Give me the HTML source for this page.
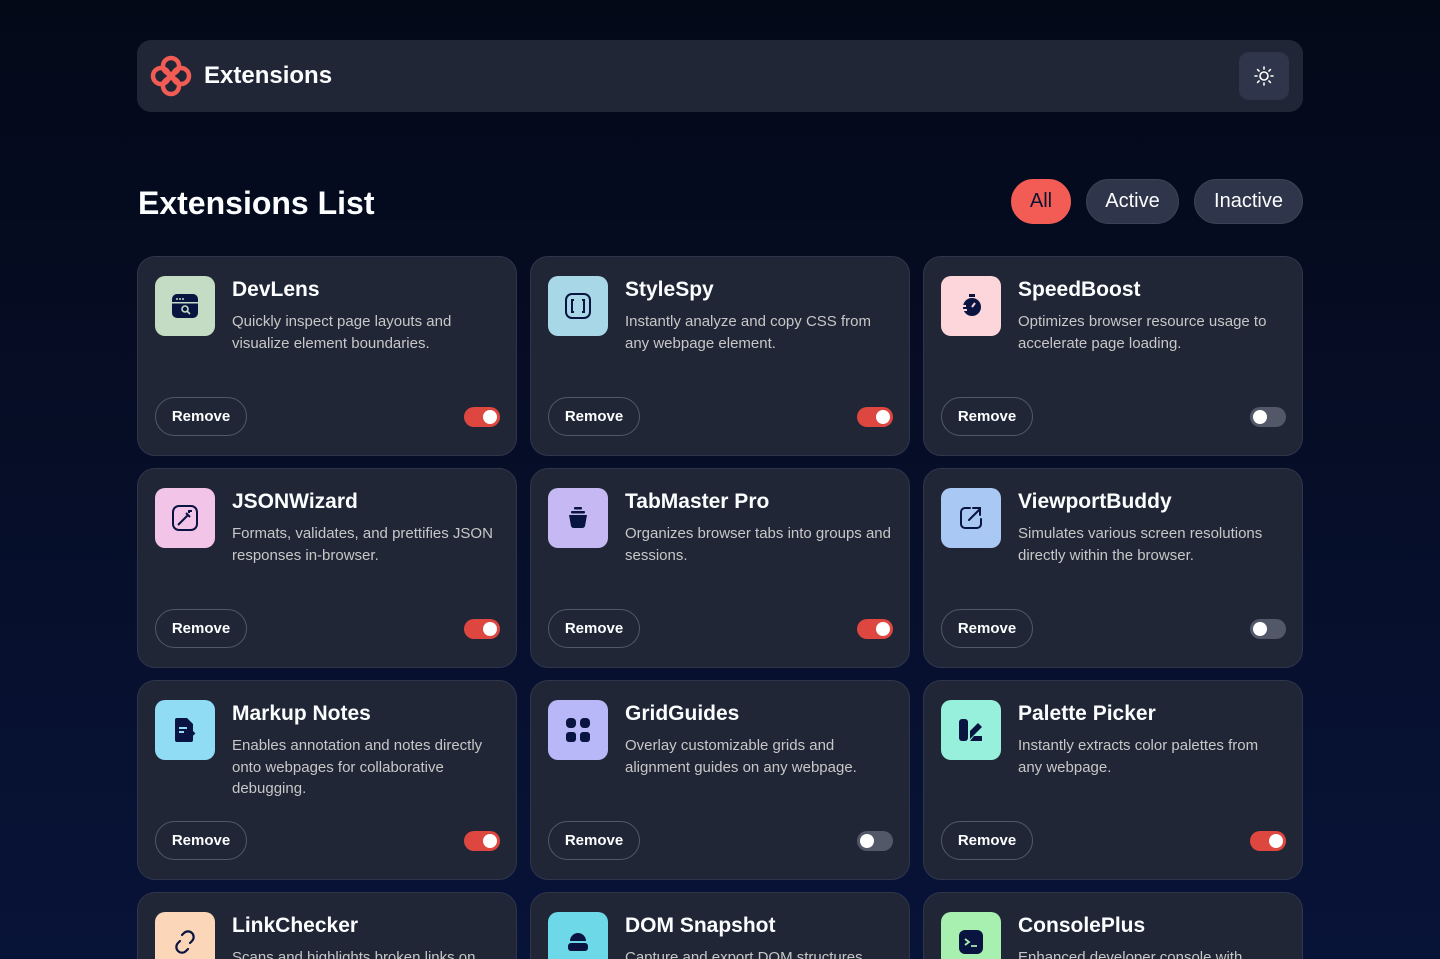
<!DOCTYPE html>
<html><head><meta charset="utf-8"><style>
*{box-sizing:border-box;margin:0;padding:0}
html,body{width:1440px;height:959px;overflow:hidden}
html{background:#060d28}
body{position:relative;background:linear-gradient(180deg,#040918 0%,#081338 100%);font-family:"Liberation Sans","DejaVu Sans",sans-serif;color:#fbfdfe}
.hdr{position:absolute;left:137px;top:40px;width:1166px;height:72px;background:#212636;border-radius:14px}
.logo{position:absolute;left:13px;top:15px}
.hdr h1{position:absolute;left:67px;top:22px;font-size:24px;font-weight:bold}
.theme{position:absolute;left:1102px;top:12px;width:50px;height:48px;background:#2f354b;border-radius:10px}
.theme svg{position:absolute;left:15px;top:14px}
h2{position:absolute;left:138px;top:185px;font-size:32px;font-weight:bold}
.f{position:absolute;top:179px;height:45px;border-radius:23px;background:#2f354b;font-size:20px;line-height:43px;text-align:center;border:1px solid #3a4256}
.card{position:absolute;width:380px;height:200px;background:#212636;border-radius:18px;border:1px solid #2f354b;overflow:hidden}
.card.last{height:67px;border-bottom:none;border-radius:18px 18px 0 0}
.ic{position:absolute;left:17px;top:19px;width:60px;height:60px;border-radius:10px}
.ic svg{position:absolute;left:15px;top:15px}
.t{position:absolute;left:94px;top:21px;font-size:21px;font-weight:bold}
.d{position:absolute;left:94px;top:54px;width:268px;font-size:15px;line-height:21.5px;color:#c7c7c7}
.rm{position:absolute;left:17px;top:140px;width:92px;height:39px;border:1px solid #535868;border-radius:20px;font-size:15px;font-weight:bold;line-height:37px;text-align:center}
.tg{position:absolute;left:326px;top:150px;width:36px;height:20px;border-radius:10px;background:#de473f}
.tg::after{content:"";position:absolute;top:3px;right:3px;width:14px;height:14px;border-radius:50%;background:#fff}
.tg.off{background:#525868}.tg.off::after{right:auto;left:3px}
</style></head><body>
<div class="hdr">
<svg class="logo" width="42" height="42" viewBox="0 0 42 42" fill="none" stroke="#f25c54" stroke-width="4.5"><rect x="13" y="3" width="16" height="16" rx="8" transform="rotate(45 21 11)"/><rect x="13" y="23" width="16" height="16" rx="8" transform="rotate(45 21 31)"/><rect x="3" y="13" width="16" height="16" rx="8" transform="rotate(45 11 21)"/><rect x="23" y="13" width="16" height="16" rx="8" transform="rotate(45 31 21)"/></svg>
<h1>Extensions</h1>
<div class="theme"><svg width="20" height="20" viewBox="0 0 20 20" fill="none" stroke="#fff" stroke-width="1.6" stroke-linecap="round"><circle cx="10" cy="10" r="4"/><path d="M10 1v2M10 17v2M1 10h2M17 10h2M3.6 3.6l1.4 1.4M15 15l1.4 1.4M3.6 16.4L5 15M15 5l1.4-1.4"/></svg></div>
</div>
<h2>Extensions List</h2>
<div class="f" style="left:1011px;width:60px;background:#f25c54;border-color:#f25c54;color:#0b1330">All</div>
<div class="f" style="left:1086px;width:93px">Active</div>
<div class="f" style="left:1194px;width:109px">Inactive</div>

<div class="card" style="left:137px;top:256px"><div class="ic" style="background:#c3dcc3"><svg width="30" height="30" viewBox="0 0 30 30"><rect x="2" y="3" width="26" height="24" rx="5" fill="#091540"/><circle cx="7" cy="8" r="1" fill="#c3dcc3"/><circle cx="10" cy="8" r="1" fill="#c3dcc3"/><circle cx="13" cy="8" r="1" fill="#c3dcc3"/><rect x="2" y="11" width="26" height="1.5" fill="#c3dcc3"/><circle cx="15" cy="18" r="3" stroke="#c3dcc3" stroke-width="1.6" fill="none"/><path d="M17 20l3 3" stroke="#c3dcc3" stroke-width="1.6"/></svg></div><div class="t">DevLens</div><div class="d">Quickly inspect page layouts and visualize element boundaries.</div><div class="rm">Remove</div><div class="tg"></div></div>
<div class="card" style="left:530px;top:256px"><div class="ic" style="background:#a8d8e8"><svg width="30" height="30" viewBox="0 0 30 30" fill="none" stroke="#091540" stroke-width="2"><rect x="3" y="3" width="24" height="24" rx="6"/><path d="M11 9h-2v12h2M19 9h2v12h-2"/></svg></div><div class="t">StyleSpy</div><div class="d">Instantly analyze and copy CSS from any webpage element.</div><div class="rm">Remove</div><div class="tg"></div></div>
<div class="card" style="left:923px;top:256px"><div class="ic" style="background:#fcd6da"><svg width="30" height="30" viewBox="0 0 30 30"><circle cx="16" cy="16" r="9" fill="#091540"/><rect x="13" y="3" width="6" height="3" fill="#091540"/><path d="M16 16l3-4" stroke="#fcd6da" stroke-width="2"/><path d="M4 15h6M5 19h6" stroke="#fcd6da" stroke-width="2"/></svg></div><div class="t">SpeedBoost</div><div class="d">Optimizes browser resource usage to accelerate page loading.</div><div class="rm">Remove</div><div class="tg off"></div></div>

<div class="card" style="left:137px;top:468px"><div class="ic" style="background:#f2c4e8"><svg width="30" height="30" viewBox="0 0 30 30" fill="none" stroke="#091540" stroke-width="2"><rect x="3" y="3" width="24" height="24" rx="6"/><path d="M8 22l10-10M16 10l4 4M19 7v3M22 8h-3"/></svg></div><div class="t">JSONWizard</div><div class="d">Formats, validates, and prettifies JSON responses in-browser.</div><div class="rm">Remove</div><div class="tg"></div></div>
<div class="card" style="left:530px;top:468px"><div class="ic" style="background:#c6b8f2"><svg width="30" height="30" viewBox="0 0 30 30" fill="#091540"><path d="M6 12h18l-2 11a3 3 0 0 1-3 2h-8a3 3 0 0 1-3-2z"/><rect x="8" y="8" width="14" height="2.5" rx="1"/><rect x="11" y="4" width="8" height="2.5" rx="1"/></svg></div><div class="t">TabMaster Pro</div><div class="d">Organizes browser tabs into groups and sessions.</div><div class="rm">Remove</div><div class="tg"></div></div>
<div class="card" style="left:923px;top:468px"><div class="ic" style="background:#a9c8f4"><svg width="30" height="30" viewBox="0 0 30 30" fill="none" stroke="#091540" stroke-width="2" stroke-linecap="round"><path d="M14 5H9a4 4 0 0 0-4 4v12a4 4 0 0 0 4 4h12a4 4 0 0 0 4-4v-5"/><path d="M13 17l11-11M17 5h7v7"/></svg></div><div class="t">ViewportBuddy</div><div class="d">Simulates various screen resolutions directly within the browser.</div><div class="rm">Remove</div><div class="tg off"></div></div>

<div class="card" style="left:137px;top:680px"><div class="ic" style="background:#8fdcf4"><svg width="30" height="30" viewBox="0 0 30 30"><path d="M7 3h10l6 6v16a2 2 0 0 1-2 2H7a2 2 0 0 1-2-2V5a2 2 0 0 1 2-2z" fill="#091540"/><path d="M9 13h8M9 17h5" stroke="#8fdcf4" stroke-width="2"/><path d="M16 25l8-8" stroke="#091540" stroke-width="4"/></svg></div><div class="t">Markup Notes</div><div class="d">Enables annotation and notes directly onto webpages for collaborative debugging.</div><div class="rm">Remove</div><div class="tg"></div></div>
<div class="card" style="left:530px;top:680px"><div class="ic" style="background:#b8b8f8"><svg width="30" height="30" viewBox="0 0 30 30" fill="#091540"><rect x="3" y="3" width="10" height="10" rx="4"/><rect x="17" y="3" width="10" height="10" rx="4"/><rect x="3" y="17" width="10" height="10" rx="3"/><rect x="17" y="17" width="10" height="10" rx="3"/></svg></div><div class="t">GridGuides</div><div class="d">Overlay customizable grids and alignment guides on any webpage.</div><div class="rm">Remove</div><div class="tg off"></div></div>
<div class="card" style="left:923px;top:680px"><div class="ic" style="background:#97f0dc"><svg width="30" height="30" viewBox="0 0 30 30" fill="#091540"><rect x="3" y="4" width="9" height="22" rx="3"/><path d="M14 24l12-12-4-4-8 8z"/><path d="M14 26h12v-5h-8z"/></svg></div><div class="t">Palette Picker</div><div class="d">Instantly extracts color palettes from any webpage.</div><div class="rm">Remove</div><div class="tg"></div></div>

<div class="card last" style="left:137px;top:892px"><div class="ic" style="background:#fcd6b8"><svg width="30" height="30" viewBox="0 0 30 30" fill="none" stroke="#091540" stroke-width="2.2" stroke-linecap="round"><path d="M12 8l2-2a5 5 0 0 1 8 8l-2 2M18 22l-2 2a5 5 0 0 1-8-8l2-2"/></svg></div><div class="t">LinkChecker</div><div class="d">Scans and highlights broken links on</div></div>
<div class="card last" style="left:530px;top:892px"><div class="ic" style="background:#6cd8e8"><svg width="30" height="30" viewBox="0 0 30 30" fill="#091540"><path d="M7 14a8 8 0 0 1 16 0z"/><rect x="5" y="16" width="20" height="8" rx="3"/></svg></div><div class="t">DOM Snapshot</div><div class="d">Capture and export DOM structures</div></div>
<div class="card last" style="left:923px;top:892px"><div class="ic" style="background:#a7f0b0"><svg width="30" height="30" viewBox="0 0 30 30"><rect x="3" y="3" width="24" height="24" rx="6" fill="#091540"/><path d="M9 12l4 3-4 3M15 19h6" stroke="#a7f0b0" stroke-width="1.8" fill="none"/></svg></div><div class="t">ConsolePlus</div><div class="d">Enhanced developer console with</div></div>
</body></html>
